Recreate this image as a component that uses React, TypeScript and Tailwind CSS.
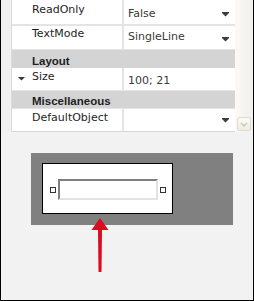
import React from "react";

const font = { fontFamily: '"DejaVu Sans", Verdana, sans-serif' };

function DropArrow() {
  return (
    <svg width="7" height="5" viewBox="0 0 7 5" className="block">
      <rect x="0" y="0" width="7" height="1" fill="#3c3c3c" />
      <polygon points="0,1 7,1 3.5,4.5" fill="#3c3c3c" />
    </svg>
  );
}

function PropRow({
  name,
  value,
  h,
  pt,
  arrow,
  expander,
}: {
  name: string;
  value?: string;
  h: string;
  pt: string;
  arrow?: string;
  expander?: boolean;
}) {
  return (
    <div className={`flex ${h}`}>
      <div className={`w-[110px] bg-white flex items-start ${expander ? "pl-[6px]" : "pl-[20px]"}`}>
        {expander && (
          <svg width="7" height="4" viewBox="0 0 7 4" className="mt-[9px] mr-[7px] shrink-0">
            <polygon points="0,0 7,0 3.5,3.5" fill="#3a3a3a" />
          </svg>
        )}
        <span className={`text-[11px] leading-[14px] text-[#1e1e1e] ${pt}`}>{name}</span>
      </div>
      <div className="w-[2px] bg-[#e4e4e4]" />
      <div className="flex-1 bg-white relative pl-[4px]">
        {value && (
          <span className={`block text-[11px] leading-[14px] text-[#3a3a3a] ${pt === "pt-[3px]" ? "pt-[7px]" : pt === "pt-[1px]" ? "pt-[4px]" : "pt-[6px]"}`}>
            {value}
          </span>
        )}
        {arrow && (
          <div className={`absolute right-[6px] ${arrow}`}>
            <DropArrow />
          </div>
        )}
      </div>
    </div>
  );
}

function Header({ label, h, pt }: { label: string; h: string; pt: string }) {
  return (
    <div className={`${h} bg-[#d4d4d4] pl-[20px] ${pt}`}>
      <span
        className="block text-[11.5px] leading-[14px] font-bold text-[#1e1e1e]"
        style={{ fontFamily: '"Liberation Sans", Arial, sans-serif' }}
      >
        {label}
      </span>
    </div>
  );
}

function Handle() {
  return <div className="w-[6px] h-[6px] border border-[#333] bg-white mt-[8px] shrink-0" />;
}

export default function App() {
  return (
    <div
      className="relative w-[254px] h-[301px] border-x border-b border-black bg-[#f2f2f2] overflow-hidden"
      style={font}
    >
      {/* property grid */}
      <div className="flex h-[132px]">
        <div className="w-[11px] bg-[#f0f0f0] border-r border-[#dcdcdc]" />
        <div className="w-[223px] flex flex-col bg-[#e4e4e4] border-b border-[#d6d6d6]">
          <PropRow name="ReadOnly" value="False" h="h-[24px]" pt="pt-[3px]" arrow="top-[12px]" />
          <div className="h-[2px]" />
          <PropRow name="TextMode" value="SingleLine" h="h-[23px]" pt="pt-[1px]" arrow="top-[11px]" />
          <div className="h-[1px]" />
          <Header label="Layout" h="h-[18px]" pt="pt-[4px]" />
          <PropRow name="Size" value="100; 21" h="h-[22px]" pt="pt-[2px]" expander />
          <div className="h-[1px]" />
          <Header label="Miscellaneous" h="h-[17px]" pt="pt-[3px]" />
          <div className="h-[1px]" />
          <PropRow name="DefaultObject" h="h-[22px]" pt="pt-[2px]" arrow="top-[9px]" />
        </div>
        <div className="w-[18px] bg-gradient-to-r from-[#fbfaf8] to-[#f1efe9] flex flex-col justify-end pb-[1px] pl-[2px]">
          <div className="w-[14px] h-[14px] rounded-[2px] border border-[#dedbcf] bg-gradient-to-b from-[#fbfbf7] to-[#eeebe1] flex items-center justify-center">
            <svg width="8" height="5" viewBox="0 0 8 5">
              <polyline points="1,1 4,4 7,1" fill="none" stroke="#c9c7bd" strokeWidth="1.4" />
            </svg>
          </div>
        </div>
      </div>

      {/* design surface */}
      <div className="ml-[30px] mt-[21px] w-[202px] h-[72px] bg-[#808080] pl-[11px] pt-[10px]">
        <div className="w-[131px] h-[51px] bg-white border border-black flex items-start pl-[7px] pt-[15px] gap-[2px]">
          <Handle />
          <div className="w-[100px] h-[21px] bg-white border-2 border-t-[#7f7f7f] border-l-[#7f7f7f] border-r-[#e2e2e2] border-b-[#e2e2e2]" />
          <Handle />
        </div>
      </div>

      {/* red arrow overlay */}
      <svg
        className="absolute left-[89px] top-[217px]"
        width="20"
        height="57"
        viewBox="0 0 20 57"
      >
        <polygon points="10,1 1.5,13 18.5,13" fill="#dc0a1e" />
        <polygon points="8,12 12,12 11.5,55 8.5,55" fill="#dc0a1e" />
      </svg>
    </div>
  );
}
